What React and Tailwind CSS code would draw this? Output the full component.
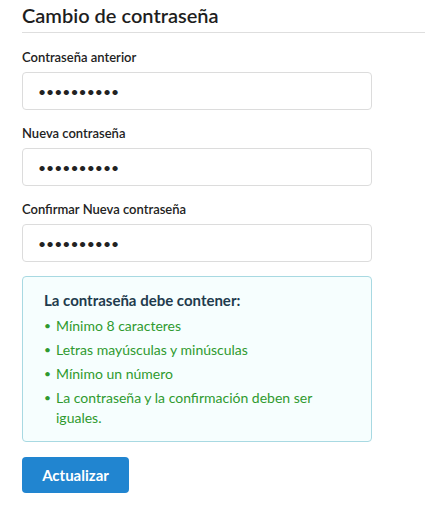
import React from 'react';

const fields = [
  { id: 'old', label: 'Contraseña anterior' },
  { id: 'new', label: 'Nueva contraseña' },
  { id: 'confirm', label: 'Confirmar Nueva contraseña' },
];

const rules = [
  'Mínimo 8 caracteres',
  'Letras mayúsculas y minúsculas',
  'Mínimo un número',
  'La contraseña y la confirmación deben ser iguales.',
];

export default function App() {
  return (
    <div className="min-h-[511px] bg-white pl-[22px] pt-[3px] text-[#222] font-['Lato','Liberation_Sans',sans-serif]">
      <h2 className="border-b border-[#dedede] pb-[5px] text-[20px] leading-6 font-semibold text-[#1e1e1e]">
        Cambio de contraseña
      </h2>

      <form className="w-[350px] pt-[15px]" onSubmit={e => e.preventDefault()}>
        {fields.map(field => (
          <div key={field.id} className="mb-[14px]">
            <label htmlFor={field.id} className="mb-[6px] block text-[13px] leading-[18px] font-semibold">
              {field.label}
            </label>
            <input
              id={field.id}
              type="password"
              defaultValue="abcdefghij"
              readOnly
              className="h-[38px] w-full rounded border border-[#dcdcdc] px-[15px] text-[14px] text-[#222] outline-none"
            />
          </div>
        ))}

        <div className="rounded border border-[#a8d9e2] bg-[#f6fefe] pl-[21px] pr-4 pt-[13px] pb-[13px]">
          <p className="mb-[6px] text-[15px] leading-5 font-bold text-[#1f3b4d]">La contraseña debe contener:</p>
          <ul className="space-y-1 text-[14px] leading-5 text-[#2f9a2f]">
            {rules.map(rule => (
              <li key={rule} className="flex">
                <span className="w-[12px] shrink-0 text-[12px]">•</span>
                <span className="max-w-[260px]">{rule}</span>
              </li>
            ))}
          </ul>
        </div>

        <button type="submit" className="mt-[15px] h-[36px] w-[107px] rounded bg-[#2185d0] text-[15px] font-bold text-white">
          Actualizar
        </button>
      </form>
    </div>
  );
}
